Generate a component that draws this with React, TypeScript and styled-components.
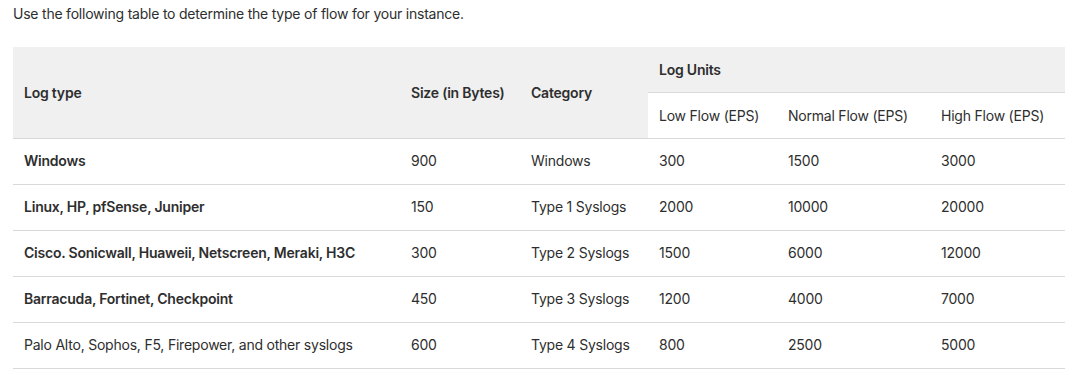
import styled, { createGlobalStyle } from "styled-components";

type FlowRow = {
  logType: string;
  size: string;
  category: string;
  low: string;
  normal: string;
  high: string;
  bold: boolean;
};

const ROWS: FlowRow[] = [
  { logType: "Windows", size: "900", category: "Windows", low: "300", normal: "1500", high: "3000", bold: true },
  { logType: "Linux, HP, pfSense, Juniper", size: "150", category: "Type 1 Syslogs", low: "2000", normal: "10000", high: "20000", bold: true },
  { logType: "Cisco. Sonicwall, Huaweii, Netscreen, Meraki, H3C", size: "300", category: "Type 2 Syslogs", low: "1500", normal: "6000", high: "12000", bold: true },
  { logType: "Barracuda, Fortinet, Checkpoint", size: "450", category: "Type 3 Syslogs", low: "1200", normal: "4000", high: "7000", bold: true },
  { logType: "Palo Alto, Sophos, F5, Firepower, and other syslogs", size: "600", category: "Type 4 Syslogs", low: "800", normal: "2500", high: "5000", bold: false },
];

const COL_WIDTHS = [387, 120, 128, 129, 153, 135];

const GlobalStyle = createGlobalStyle`
  body {
    margin: 0;
    background: #ffffff;
    font-family: Inter, "Liberation Sans", sans-serif;
    color: #2e2e2e;
    letter-spacing: -0.22px;
  }
`;

const Page = styled.div`
  padding: 4px 13px 0 13px;
`;

const Intro = styled.p`
  margin: 0 0 23px 0;
  font-size: 14px;
  line-height: 20px;
`;

const Table = styled.table`
  border-collapse: collapse;
  table-layout: fixed;
  width: 1052px;
  font-size: 14px;
`;

const HeadCell = styled.th<{ $shade?: boolean; $height: number }>`
  background: ${(p) => (p.$shade ? "#f0f0f0" : "#ffffff")};
  height: ${(p) => p.$height}px;
  padding: 0 11px;
  text-align: left;
  font-weight: ${(p) => (p.$shade ? 600 : 400)};
  vertical-align: middle;
  border-bottom: 1px solid #d9d9d9;
  box-sizing: border-box;
`;

const Cell = styled.td<{ $bold?: boolean }>`
  height: 46px;
  padding: 0 11px 1px 11px;
  font-weight: ${(p) => (p.$bold ? 600 : 400)};
  border-bottom: 1px solid #d9d9d9;
  box-sizing: border-box;
  white-space: nowrap;
`;

export default function App() {
  return (
    <Page>
      <GlobalStyle />
      <Intro>Use the following table to determine the type of flow for your instance.</Intro>
      <Table>
        <colgroup>
          {COL_WIDTHS.map((w, i) => (
            <col key={i} style={{ width: w }} />
          ))}
        </colgroup>
        <thead>
          <tr>
            <HeadCell $shade $height={91} rowSpan={2}>Log type</HeadCell>
            <HeadCell $shade $height={91} rowSpan={2}>Size (in Bytes)</HeadCell>
            <HeadCell $shade $height={91} rowSpan={2}>Category</HeadCell>
            <HeadCell $shade $height={45} colSpan={3}>Log Units</HeadCell>
          </tr>
          <tr>
            <HeadCell $height={46}>Low Flow (EPS)</HeadCell>
            <HeadCell $height={46}>Normal Flow (EPS)</HeadCell>
            <HeadCell $height={46}>High Flow (EPS)</HeadCell>
          </tr>
        </thead>
        <tbody>
          {ROWS.map((r) => (
            <tr key={r.logType}>
              <Cell $bold={r.bold}>{r.logType}</Cell>
              <Cell>{r.size}</Cell>
              <Cell>{r.category}</Cell>
              <Cell>{r.low}</Cell>
              <Cell>{r.normal}</Cell>
              <Cell>{r.high}</Cell>
            </tr>
          ))}
        </tbody>
      </Table>
    </Page>
  );
}
